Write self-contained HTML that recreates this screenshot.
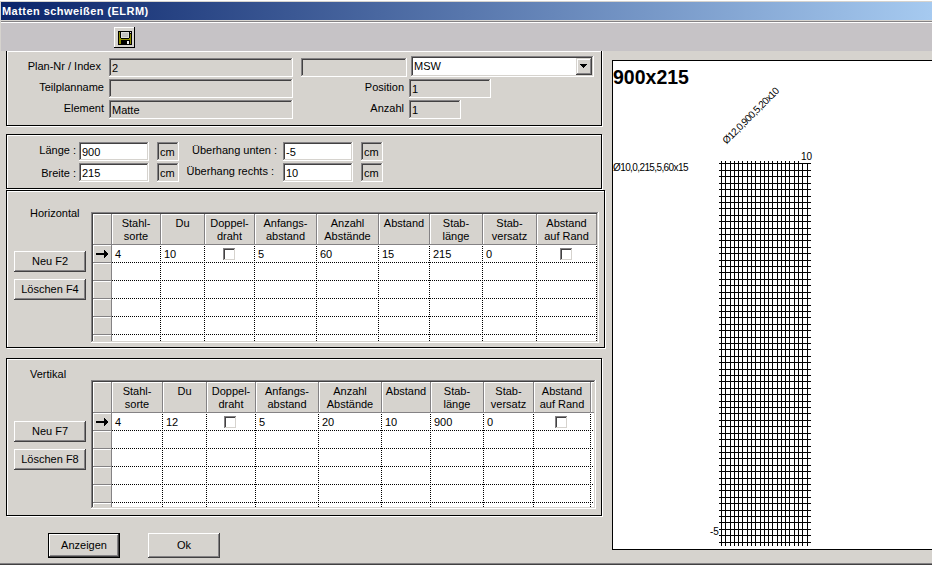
<!DOCTYPE html>
<html><head><meta charset="utf-8"><style>
html,body{margin:0;padding:0;}
body{width:932px;height:565px;position:relative;overflow:hidden;background:#d6d3ce;font-family:"Liberation Sans",sans-serif;}
.a{position:absolute;}
.t{position:absolute;white-space:nowrap;color:#000;font-family:"Liberation Sans",sans-serif;}
</style></head><body>
<div class="a" style="left:0px;top:0px;width:932px;height:1px;background:#ffffff;"></div>
<div class="a" style="left:1px;top:2px;width:931px;height:18px;background:linear-gradient(to right,#0a246a,#a6caf0);"></div>
<div class="t" style="left:2px;top:5px;font-size:11px;line-height:13px;color:#fff;font-weight:bold;letter-spacing:0.45px;">Matten schweißen (ELRM)</div>
<div class="a" style="left:1px;top:21px;width:931px;height:1px;background:#848284;"></div>
<div class="a" style="left:1px;top:22px;width:931px;height:1px;background:#ffffff;"></div>
<div class="a" style="left:1px;top:23px;width:931px;height:28px;background:#c6c3c6;"></div>
<div class="a" style="left:114px;top:27px;width:21px;height:21px;background:#d6d3ce;"></div>
<div class="a" style="left:114px;top:27px;width:21px;height:1px;background:#fff;"></div>
<div class="a" style="left:114px;top:27px;width:1px;height:21px;background:#fff;"></div>
<div class="a" style="left:114px;top:47px;width:21px;height:1px;background:#000;"></div>
<div class="a" style="left:134px;top:27px;width:1px;height:21px;background:#000;"></div>
<svg class="a" style="left:118px;top:31px" width="14" height="14" shape-rendering="crispEdges"><rect x="0" y="0" width="14" height="14" fill="#000"/><rect x="1" y="1" width="1" height="12" fill="#8c8a00"/><rect x="2" y="7" width="1" height="6" fill="#8c8a00"/><rect x="12" y="3" width="1" height="10" fill="#8c8a00"/><rect x="11" y="7" width="1" height="2" fill="#8c8a00"/><rect x="1" y="8" width="12" height="1" fill="#8c8a00"/><rect x="12" y="1" width="1" height="1" fill="#e0e0e0"/><rect x="3" y="1" width="8" height="6" fill="#dcdcdc"/><rect x="4" y="2" width="6" height="4" fill="#c0c0c0"/><rect x="9" y="10" width="2" height="3" fill="#f0f0f0"/></svg>
<div class="a" style="left:7px;top:51px;width:596px;height:1px;background:#fff;"></div>
<div class="a" style="left:7px;top:51px;width:1px;height:76px;background:#fff;"></div>
<div class="a" style="left:7px;top:126px;width:596px;height:1px;background:#fff;"></div>
<div class="a" style="left:602px;top:51px;width:1px;height:76px;background:#fff;"></div>
<div class="a" style="left:6px;top:50px;width:596px;height:1px;background:#000;"></div>
<div class="a" style="left:6px;top:50px;width:1px;height:76px;background:#000;"></div>
<div class="a" style="left:6px;top:125px;width:596px;height:1px;background:#000;"></div>
<div class="a" style="left:601px;top:50px;width:1px;height:76px;background:#000;"></div>
<div class="a" style="left:7px;top:135px;width:596px;height:1px;background:#fff;"></div>
<div class="a" style="left:7px;top:135px;width:1px;height:55px;background:#fff;"></div>
<div class="a" style="left:7px;top:189px;width:596px;height:1px;background:#fff;"></div>
<div class="a" style="left:602px;top:135px;width:1px;height:55px;background:#fff;"></div>
<div class="a" style="left:6px;top:134px;width:596px;height:1px;background:#000;"></div>
<div class="a" style="left:6px;top:134px;width:1px;height:55px;background:#000;"></div>
<div class="a" style="left:6px;top:188px;width:596px;height:1px;background:#000;"></div>
<div class="a" style="left:601px;top:134px;width:1px;height:55px;background:#000;"></div>
<div class="a" style="left:7px;top:191px;width:599px;height:1px;background:#fff;"></div>
<div class="a" style="left:7px;top:191px;width:1px;height:158px;background:#fff;"></div>
<div class="a" style="left:7px;top:348px;width:599px;height:1px;background:#fff;"></div>
<div class="a" style="left:605px;top:191px;width:1px;height:158px;background:#fff;"></div>
<div class="a" style="left:6px;top:190px;width:599px;height:1px;background:#000;"></div>
<div class="a" style="left:6px;top:190px;width:1px;height:158px;background:#000;"></div>
<div class="a" style="left:6px;top:347px;width:599px;height:1px;background:#000;"></div>
<div class="a" style="left:604px;top:190px;width:1px;height:158px;background:#000;"></div>
<div class="a" style="left:7px;top:359px;width:596px;height:1px;background:#fff;"></div>
<div class="a" style="left:7px;top:359px;width:1px;height:158px;background:#fff;"></div>
<div class="a" style="left:7px;top:516px;width:596px;height:1px;background:#fff;"></div>
<div class="a" style="left:602px;top:359px;width:1px;height:158px;background:#fff;"></div>
<div class="a" style="left:6px;top:358px;width:596px;height:1px;background:#000;"></div>
<div class="a" style="left:6px;top:358px;width:1px;height:158px;background:#000;"></div>
<div class="a" style="left:6px;top:515px;width:596px;height:1px;background:#000;"></div>
<div class="a" style="left:601px;top:358px;width:1px;height:158px;background:#000;"></div>
<div class="a" style="left:1px;top:50px;width:931px;height:1px;background:#c6c3c6;"></div>
<div class="t" style="right:831px;top:60px;font-size:11px;line-height:13px;text-align:right;">Plan-Nr / Index</div>
<div class="t" style="right:828px;top:81px;font-size:11px;line-height:13px;text-align:right;">Teilplanname</div>
<div class="t" style="right:828px;top:102px;font-size:11px;line-height:13px;text-align:right;">Element</div>
<div class="a" style="left:109px;top:58px;width:184px;height:19px;background:#d6d3ce;"></div>
<div class="a" style="left:109px;top:58px;width:184px;height:1px;background:#848284;"></div>
<div class="a" style="left:109px;top:58px;width:1px;height:19px;background:#848284;"></div>
<div class="a" style="left:110px;top:59px;width:182px;height:1px;background:#424142;"></div>
<div class="a" style="left:110px;top:59px;width:1px;height:17px;background:#424142;"></div>
<div class="a" style="left:109px;top:76px;width:184px;height:1px;background:#ffffff;"></div>
<div class="a" style="left:292px;top:58px;width:1px;height:19px;background:#ffffff;"></div>
<div class="a" style="left:110px;top:75px;width:182px;height:1px;background:#d6d3ce;"></div>
<div class="a" style="left:291px;top:59px;width:1px;height:17px;background:#d6d3ce;"></div>
<div class="t" style="left:112px;top:62px;font-size:11px;line-height:13px;color:#000;">2</div>
<div class="a" style="left:109px;top:79px;width:184px;height:19px;background:#d6d3ce;"></div>
<div class="a" style="left:109px;top:79px;width:184px;height:1px;background:#848284;"></div>
<div class="a" style="left:109px;top:79px;width:1px;height:19px;background:#848284;"></div>
<div class="a" style="left:110px;top:80px;width:182px;height:1px;background:#424142;"></div>
<div class="a" style="left:110px;top:80px;width:1px;height:17px;background:#424142;"></div>
<div class="a" style="left:109px;top:97px;width:184px;height:1px;background:#ffffff;"></div>
<div class="a" style="left:292px;top:79px;width:1px;height:19px;background:#ffffff;"></div>
<div class="a" style="left:110px;top:96px;width:182px;height:1px;background:#d6d3ce;"></div>
<div class="a" style="left:291px;top:80px;width:1px;height:17px;background:#d6d3ce;"></div>
<div class="a" style="left:109px;top:100px;width:184px;height:19px;background:#d6d3ce;"></div>
<div class="a" style="left:109px;top:100px;width:184px;height:1px;background:#848284;"></div>
<div class="a" style="left:109px;top:100px;width:1px;height:19px;background:#848284;"></div>
<div class="a" style="left:110px;top:101px;width:182px;height:1px;background:#424142;"></div>
<div class="a" style="left:110px;top:101px;width:1px;height:17px;background:#424142;"></div>
<div class="a" style="left:109px;top:118px;width:184px;height:1px;background:#ffffff;"></div>
<div class="a" style="left:292px;top:100px;width:1px;height:19px;background:#ffffff;"></div>
<div class="a" style="left:110px;top:117px;width:182px;height:1px;background:#d6d3ce;"></div>
<div class="a" style="left:291px;top:101px;width:1px;height:17px;background:#d6d3ce;"></div>
<div class="t" style="left:112px;top:104px;font-size:11px;line-height:13px;color:#000;">Matte</div>
<div class="a" style="left:301px;top:58px;width:106px;height:19px;background:#d6d3ce;"></div>
<div class="a" style="left:301px;top:58px;width:106px;height:1px;background:#848284;"></div>
<div class="a" style="left:301px;top:58px;width:1px;height:19px;background:#848284;"></div>
<div class="a" style="left:302px;top:59px;width:104px;height:1px;background:#424142;"></div>
<div class="a" style="left:302px;top:59px;width:1px;height:17px;background:#424142;"></div>
<div class="a" style="left:301px;top:76px;width:106px;height:1px;background:#ffffff;"></div>
<div class="a" style="left:406px;top:58px;width:1px;height:19px;background:#ffffff;"></div>
<div class="a" style="left:302px;top:75px;width:104px;height:1px;background:#d6d3ce;"></div>
<div class="a" style="left:405px;top:59px;width:1px;height:17px;background:#d6d3ce;"></div>
<div class="a" style="left:411px;top:56px;width:183px;height:21px;background:#fff;"></div>
<div class="a" style="left:411px;top:56px;width:183px;height:1px;background:#848284;"></div>
<div class="a" style="left:411px;top:56px;width:1px;height:21px;background:#848284;"></div>
<div class="a" style="left:412px;top:57px;width:181px;height:1px;background:#424142;"></div>
<div class="a" style="left:412px;top:57px;width:1px;height:19px;background:#424142;"></div>
<div class="a" style="left:411px;top:76px;width:183px;height:1px;background:#ffffff;"></div>
<div class="a" style="left:593px;top:56px;width:1px;height:21px;background:#ffffff;"></div>
<div class="a" style="left:412px;top:75px;width:181px;height:1px;background:#d6d3ce;"></div>
<div class="a" style="left:592px;top:57px;width:1px;height:19px;background:#d6d3ce;"></div>
<div class="t" style="left:414px;top:60px;font-size:11px;line-height:13px;color:#000;">MSW</div>
<div class="a" style="left:576px;top:58px;width:16px;height:17px;background:#d6d3ce;"></div>
<div class="a" style="left:576px;top:58px;width:16px;height:1px;background:#d6d3ce;"></div>
<div class="a" style="left:576px;top:58px;width:1px;height:17px;background:#d6d3ce;"></div>
<div class="a" style="left:577px;top:59px;width:14px;height:1px;background:#fff;"></div>
<div class="a" style="left:577px;top:59px;width:1px;height:15px;background:#fff;"></div>
<div class="a" style="left:576px;top:74px;width:16px;height:1px;background:#424142;"></div>
<div class="a" style="left:591px;top:58px;width:1px;height:17px;background:#424142;"></div>
<div class="a" style="left:577px;top:73px;width:14px;height:1px;background:#848284;"></div>
<div class="a" style="left:590px;top:59px;width:1px;height:15px;background:#848284;"></div>
<div class="a" style="left:580px;top:64px;width:7px;height:1px;background:#000;"></div>
<div class="a" style="left:581px;top:65px;width:5px;height:1px;background:#000;"></div>
<div class="a" style="left:582px;top:66px;width:3px;height:1px;background:#000;"></div>
<div class="a" style="left:583px;top:67px;width:1px;height:1px;background:#000;"></div>
<div class="t" style="right:528px;top:81px;font-size:11px;line-height:13px;text-align:right;">Position</div>
<div class="a" style="left:409px;top:79px;width:82px;height:19px;background:#d6d3ce;"></div>
<div class="a" style="left:409px;top:79px;width:82px;height:1px;background:#848284;"></div>
<div class="a" style="left:409px;top:79px;width:1px;height:19px;background:#848284;"></div>
<div class="a" style="left:410px;top:80px;width:80px;height:1px;background:#424142;"></div>
<div class="a" style="left:410px;top:80px;width:1px;height:17px;background:#424142;"></div>
<div class="a" style="left:409px;top:97px;width:82px;height:1px;background:#ffffff;"></div>
<div class="a" style="left:490px;top:79px;width:1px;height:19px;background:#ffffff;"></div>
<div class="a" style="left:410px;top:96px;width:80px;height:1px;background:#d6d3ce;"></div>
<div class="a" style="left:489px;top:80px;width:1px;height:17px;background:#d6d3ce;"></div>
<div class="t" style="left:412px;top:83px;font-size:11px;line-height:13px;color:#000;">1</div>
<div class="t" style="right:528px;top:102px;font-size:11px;line-height:13px;text-align:right;">Anzahl</div>
<div class="a" style="left:409px;top:100px;width:52px;height:19px;background:#d6d3ce;"></div>
<div class="a" style="left:409px;top:100px;width:52px;height:1px;background:#848284;"></div>
<div class="a" style="left:409px;top:100px;width:1px;height:19px;background:#848284;"></div>
<div class="a" style="left:410px;top:101px;width:50px;height:1px;background:#424142;"></div>
<div class="a" style="left:410px;top:101px;width:1px;height:17px;background:#424142;"></div>
<div class="a" style="left:409px;top:118px;width:52px;height:1px;background:#ffffff;"></div>
<div class="a" style="left:460px;top:100px;width:1px;height:19px;background:#ffffff;"></div>
<div class="a" style="left:410px;top:117px;width:50px;height:1px;background:#d6d3ce;"></div>
<div class="a" style="left:459px;top:101px;width:1px;height:17px;background:#d6d3ce;"></div>
<div class="t" style="left:412px;top:104px;font-size:11px;line-height:13px;color:#000;">1</div>
<div class="t" style="right:856px;top:144px;font-size:11px;line-height:13px;text-align:right;">Länge :</div>
<div class="a" style="left:79px;top:142px;width:70px;height:19px;background:#fff;"></div>
<div class="a" style="left:79px;top:142px;width:70px;height:1px;background:#848284;"></div>
<div class="a" style="left:79px;top:142px;width:1px;height:19px;background:#848284;"></div>
<div class="a" style="left:80px;top:143px;width:68px;height:1px;background:#424142;"></div>
<div class="a" style="left:80px;top:143px;width:1px;height:17px;background:#424142;"></div>
<div class="a" style="left:79px;top:160px;width:70px;height:1px;background:#ffffff;"></div>
<div class="a" style="left:148px;top:142px;width:1px;height:19px;background:#ffffff;"></div>
<div class="a" style="left:80px;top:159px;width:68px;height:1px;background:#d6d3ce;"></div>
<div class="a" style="left:147px;top:143px;width:1px;height:17px;background:#d6d3ce;"></div>
<div class="t" style="left:82px;top:146px;font-size:11px;line-height:13px;color:#000;">900</div>
<div class="a" style="left:157px;top:142px;width:22px;height:19px;background:#d6d3ce;"></div>
<div class="a" style="left:157px;top:142px;width:22px;height:1px;background:#848284;"></div>
<div class="a" style="left:157px;top:142px;width:1px;height:19px;background:#848284;"></div>
<div class="a" style="left:158px;top:143px;width:20px;height:1px;background:#424142;"></div>
<div class="a" style="left:158px;top:143px;width:1px;height:17px;background:#424142;"></div>
<div class="a" style="left:157px;top:160px;width:22px;height:1px;background:#ffffff;"></div>
<div class="a" style="left:178px;top:142px;width:1px;height:19px;background:#ffffff;"></div>
<div class="a" style="left:158px;top:159px;width:20px;height:1px;background:#d6d3ce;"></div>
<div class="a" style="left:177px;top:143px;width:1px;height:17px;background:#d6d3ce;"></div>
<div class="t" style="left:160px;top:146px;font-size:11px;line-height:13px;color:#000;">cm</div>
<div class="t" style="right:856px;top:167px;font-size:11px;line-height:13px;text-align:right;">Breite :</div>
<div class="a" style="left:79px;top:163px;width:70px;height:19px;background:#fff;"></div>
<div class="a" style="left:79px;top:163px;width:70px;height:1px;background:#848284;"></div>
<div class="a" style="left:79px;top:163px;width:1px;height:19px;background:#848284;"></div>
<div class="a" style="left:80px;top:164px;width:68px;height:1px;background:#424142;"></div>
<div class="a" style="left:80px;top:164px;width:1px;height:17px;background:#424142;"></div>
<div class="a" style="left:79px;top:181px;width:70px;height:1px;background:#ffffff;"></div>
<div class="a" style="left:148px;top:163px;width:1px;height:19px;background:#ffffff;"></div>
<div class="a" style="left:80px;top:180px;width:68px;height:1px;background:#d6d3ce;"></div>
<div class="a" style="left:147px;top:164px;width:1px;height:17px;background:#d6d3ce;"></div>
<div class="t" style="left:82px;top:167px;font-size:11px;line-height:13px;color:#000;">215</div>
<div class="a" style="left:157px;top:163px;width:22px;height:19px;background:#d6d3ce;"></div>
<div class="a" style="left:157px;top:163px;width:22px;height:1px;background:#848284;"></div>
<div class="a" style="left:157px;top:163px;width:1px;height:19px;background:#848284;"></div>
<div class="a" style="left:158px;top:164px;width:20px;height:1px;background:#424142;"></div>
<div class="a" style="left:158px;top:164px;width:1px;height:17px;background:#424142;"></div>
<div class="a" style="left:157px;top:181px;width:22px;height:1px;background:#ffffff;"></div>
<div class="a" style="left:178px;top:163px;width:1px;height:19px;background:#ffffff;"></div>
<div class="a" style="left:158px;top:180px;width:20px;height:1px;background:#d6d3ce;"></div>
<div class="a" style="left:177px;top:164px;width:1px;height:17px;background:#d6d3ce;"></div>
<div class="t" style="left:160px;top:167px;font-size:11px;line-height:13px;color:#000;">cm</div>
<div class="t" style="right:655px;top:144px;font-size:11px;line-height:13px;text-align:right;">Überhang unten :</div>
<div class="a" style="left:283px;top:142px;width:70px;height:19px;background:#fff;"></div>
<div class="a" style="left:283px;top:142px;width:70px;height:1px;background:#848284;"></div>
<div class="a" style="left:283px;top:142px;width:1px;height:19px;background:#848284;"></div>
<div class="a" style="left:284px;top:143px;width:68px;height:1px;background:#424142;"></div>
<div class="a" style="left:284px;top:143px;width:1px;height:17px;background:#424142;"></div>
<div class="a" style="left:283px;top:160px;width:70px;height:1px;background:#ffffff;"></div>
<div class="a" style="left:352px;top:142px;width:1px;height:19px;background:#ffffff;"></div>
<div class="a" style="left:284px;top:159px;width:68px;height:1px;background:#d6d3ce;"></div>
<div class="a" style="left:351px;top:143px;width:1px;height:17px;background:#d6d3ce;"></div>
<div class="t" style="left:286px;top:146px;font-size:11px;line-height:13px;color:#000;">-5</div>
<div class="a" style="left:361px;top:142px;width:22px;height:19px;background:#d6d3ce;"></div>
<div class="a" style="left:361px;top:142px;width:22px;height:1px;background:#848284;"></div>
<div class="a" style="left:361px;top:142px;width:1px;height:19px;background:#848284;"></div>
<div class="a" style="left:362px;top:143px;width:20px;height:1px;background:#424142;"></div>
<div class="a" style="left:362px;top:143px;width:1px;height:17px;background:#424142;"></div>
<div class="a" style="left:361px;top:160px;width:22px;height:1px;background:#ffffff;"></div>
<div class="a" style="left:382px;top:142px;width:1px;height:19px;background:#ffffff;"></div>
<div class="a" style="left:362px;top:159px;width:20px;height:1px;background:#d6d3ce;"></div>
<div class="a" style="left:381px;top:143px;width:1px;height:17px;background:#d6d3ce;"></div>
<div class="t" style="left:364px;top:146px;font-size:11px;line-height:13px;color:#000;">cm</div>
<div class="t" style="right:658px;top:165px;font-size:11px;line-height:13px;text-align:right;">Überhang rechts :</div>
<div class="a" style="left:283px;top:163px;width:70px;height:19px;background:#fff;"></div>
<div class="a" style="left:283px;top:163px;width:70px;height:1px;background:#848284;"></div>
<div class="a" style="left:283px;top:163px;width:1px;height:19px;background:#848284;"></div>
<div class="a" style="left:284px;top:164px;width:68px;height:1px;background:#424142;"></div>
<div class="a" style="left:284px;top:164px;width:1px;height:17px;background:#424142;"></div>
<div class="a" style="left:283px;top:181px;width:70px;height:1px;background:#ffffff;"></div>
<div class="a" style="left:352px;top:163px;width:1px;height:19px;background:#ffffff;"></div>
<div class="a" style="left:284px;top:180px;width:68px;height:1px;background:#d6d3ce;"></div>
<div class="a" style="left:351px;top:164px;width:1px;height:17px;background:#d6d3ce;"></div>
<div class="t" style="left:286px;top:167px;font-size:11px;line-height:13px;color:#000;">10</div>
<div class="a" style="left:361px;top:163px;width:22px;height:19px;background:#d6d3ce;"></div>
<div class="a" style="left:361px;top:163px;width:22px;height:1px;background:#848284;"></div>
<div class="a" style="left:361px;top:163px;width:1px;height:19px;background:#848284;"></div>
<div class="a" style="left:362px;top:164px;width:20px;height:1px;background:#424142;"></div>
<div class="a" style="left:362px;top:164px;width:1px;height:17px;background:#424142;"></div>
<div class="a" style="left:361px;top:181px;width:22px;height:1px;background:#ffffff;"></div>
<div class="a" style="left:382px;top:163px;width:1px;height:19px;background:#ffffff;"></div>
<div class="a" style="left:362px;top:180px;width:20px;height:1px;background:#d6d3ce;"></div>
<div class="a" style="left:381px;top:164px;width:1px;height:17px;background:#d6d3ce;"></div>
<div class="t" style="left:364px;top:167px;font-size:11px;line-height:13px;color:#000;">cm</div>
<div class="a" style="left:91px;top:212px;width:508px;height:131px;background:#fff;"></div>
<div class="a" style="left:91px;top:212px;width:508px;height:1px;background:#848284;"></div>
<div class="a" style="left:91px;top:212px;width:1px;height:131px;background:#848284;"></div>
<div class="a" style="left:92px;top:213px;width:506px;height:1px;background:#424142;"></div>
<div class="a" style="left:92px;top:213px;width:1px;height:129px;background:#424142;"></div>
<div class="a" style="left:91px;top:342px;width:508px;height:1px;background:#ffffff;"></div>
<div class="a" style="left:598px;top:212px;width:1px;height:131px;background:#ffffff;"></div>
<div class="a" style="left:92px;top:341px;width:506px;height:1px;background:#d6d3ce;"></div>
<div class="a" style="left:597px;top:213px;width:1px;height:129px;background:#d6d3ce;"></div>
<div class="a" style="left:93px;top:214px;width:504px;height:127px;overflow:hidden;">
<div class="a" style="left:0px;top:0px;width:504px;height:30px;background:#d6d3ce;"></div>
<div class="a" style="left:0px;top:0px;width:504px;height:1px;background:#fff;"></div>
<div class="a" style="left:0px;top:30px;width:18px;height:97px;background:#d6d3ce;"></div>
<div class="a" style="left:18px;top:0px;width:1px;height:31px;background:#848284;"></div>
<div class="a" style="left:0px;top:0px;width:1px;height:30px;background:#fff;"></div>
<div class="a" style="left:67px;top:0px;width:1px;height:31px;background:#848284;"></div>
<div class="a" style="left:19px;top:0px;width:1px;height:30px;background:#fff;"></div>
<div class="a" style="left:111px;top:0px;width:1px;height:31px;background:#848284;"></div>
<div class="a" style="left:68px;top:0px;width:1px;height:30px;background:#fff;"></div>
<div class="a" style="left:161px;top:0px;width:1px;height:31px;background:#848284;"></div>
<div class="a" style="left:112px;top:0px;width:1px;height:30px;background:#fff;"></div>
<div class="a" style="left:223px;top:0px;width:1px;height:31px;background:#848284;"></div>
<div class="a" style="left:162px;top:0px;width:1px;height:30px;background:#fff;"></div>
<div class="a" style="left:285px;top:0px;width:1px;height:31px;background:#848284;"></div>
<div class="a" style="left:224px;top:0px;width:1px;height:30px;background:#fff;"></div>
<div class="a" style="left:336px;top:0px;width:1px;height:31px;background:#848284;"></div>
<div class="a" style="left:286px;top:0px;width:1px;height:30px;background:#fff;"></div>
<div class="a" style="left:389px;top:0px;width:1px;height:31px;background:#848284;"></div>
<div class="a" style="left:337px;top:0px;width:1px;height:30px;background:#fff;"></div>
<div class="a" style="left:443px;top:0px;width:1px;height:31px;background:#848284;"></div>
<div class="a" style="left:390px;top:0px;width:1px;height:30px;background:#fff;"></div>
<div class="a" style="left:503px;top:0px;width:1px;height:31px;background:#848284;"></div>
<div class="a" style="left:444px;top:0px;width:1px;height:30px;background:#fff;"></div>
<div class="a" style="left:0px;top:30px;width:504px;height:1px;background:#848284;"></div>
<div class="a" style="left:18px;top:30px;width:1px;height:97px;background:#848284;"></div>
<div class="a" style="left:0px;top:31px;width:1px;height:17px;background:#fff;"></div>
<div class="a" style="left:0px;top:31px;width:18px;height:1px;background:#fff;"></div>
<div class="a" style="left:0px;top:48px;width:18px;height:1px;background:#848284;"></div>
<div class="a" style="left:19px;top:48px;width:485px;height:1px;background:transparent;background-image:repeating-linear-gradient(to right,#000 0,#000 1px,transparent 1px,transparent 2px);background-position:0px 0;"></div>
<div class="a" style="left:0px;top:49px;width:1px;height:17px;background:#fff;"></div>
<div class="a" style="left:0px;top:49px;width:18px;height:1px;background:#fff;"></div>
<div class="a" style="left:0px;top:66px;width:18px;height:1px;background:#848284;"></div>
<div class="a" style="left:19px;top:66px;width:485px;height:1px;background:transparent;background-image:repeating-linear-gradient(to right,#000 0,#000 1px,transparent 1px,transparent 2px);background-position:0px 0;"></div>
<div class="a" style="left:0px;top:67px;width:1px;height:17px;background:#fff;"></div>
<div class="a" style="left:0px;top:67px;width:18px;height:1px;background:#fff;"></div>
<div class="a" style="left:0px;top:84px;width:18px;height:1px;background:#848284;"></div>
<div class="a" style="left:19px;top:84px;width:485px;height:1px;background:transparent;background-image:repeating-linear-gradient(to right,#000 0,#000 1px,transparent 1px,transparent 2px);background-position:0px 0;"></div>
<div class="a" style="left:0px;top:85px;width:1px;height:17px;background:#fff;"></div>
<div class="a" style="left:0px;top:85px;width:18px;height:1px;background:#fff;"></div>
<div class="a" style="left:0px;top:102px;width:18px;height:1px;background:#848284;"></div>
<div class="a" style="left:19px;top:102px;width:485px;height:1px;background:transparent;background-image:repeating-linear-gradient(to right,#000 0,#000 1px,transparent 1px,transparent 2px);background-position:0px 0;"></div>
<div class="a" style="left:0px;top:103px;width:1px;height:17px;background:#fff;"></div>
<div class="a" style="left:0px;top:103px;width:18px;height:1px;background:#fff;"></div>
<div class="a" style="left:0px;top:120px;width:18px;height:1px;background:#848284;"></div>
<div class="a" style="left:19px;top:120px;width:485px;height:1px;background:transparent;background-image:repeating-linear-gradient(to right,#000 0,#000 1px,transparent 1px,transparent 2px);background-position:0px 0;"></div>
<div class="a" style="left:0px;top:121px;width:1px;height:17px;background:#fff;"></div>
<div class="a" style="left:0px;top:121px;width:18px;height:1px;background:#fff;"></div>
<div class="a" style="left:0px;top:138px;width:18px;height:1px;background:#848284;"></div>
<div class="a" style="left:19px;top:138px;width:485px;height:1px;background:transparent;background-image:repeating-linear-gradient(to right,#000 0,#000 1px,transparent 1px,transparent 2px);background-position:0px 0;"></div>
<div class="a" style="left:67px;top:31px;width:1px;height:96px;background:transparent;background-image:repeating-linear-gradient(to bottom,#000 0,#000 1px,transparent 1px,transparent 2px);background-position:0 1px;"></div>
<div class="a" style="left:111px;top:31px;width:1px;height:96px;background:transparent;background-image:repeating-linear-gradient(to bottom,#000 0,#000 1px,transparent 1px,transparent 2px);background-position:0 1px;"></div>
<div class="a" style="left:161px;top:31px;width:1px;height:96px;background:transparent;background-image:repeating-linear-gradient(to bottom,#000 0,#000 1px,transparent 1px,transparent 2px);background-position:0 1px;"></div>
<div class="a" style="left:223px;top:31px;width:1px;height:96px;background:transparent;background-image:repeating-linear-gradient(to bottom,#000 0,#000 1px,transparent 1px,transparent 2px);background-position:0 1px;"></div>
<div class="a" style="left:285px;top:31px;width:1px;height:96px;background:transparent;background-image:repeating-linear-gradient(to bottom,#000 0,#000 1px,transparent 1px,transparent 2px);background-position:0 1px;"></div>
<div class="a" style="left:336px;top:31px;width:1px;height:96px;background:transparent;background-image:repeating-linear-gradient(to bottom,#000 0,#000 1px,transparent 1px,transparent 2px);background-position:0 1px;"></div>
<div class="a" style="left:389px;top:31px;width:1px;height:96px;background:transparent;background-image:repeating-linear-gradient(to bottom,#000 0,#000 1px,transparent 1px,transparent 2px);background-position:0 1px;"></div>
<div class="a" style="left:443px;top:31px;width:1px;height:96px;background:transparent;background-image:repeating-linear-gradient(to bottom,#000 0,#000 1px,transparent 1px,transparent 2px);background-position:0 1px;"></div>
<div class="a" style="left:503px;top:31px;width:1px;height:96px;background:transparent;background-image:repeating-linear-gradient(to bottom,#000 0,#000 1px,transparent 1px,transparent 2px);background-position:0 1px;"></div>
</div>
<div class="t" style="left:112px;width:48px;top:217px;font-size:11px;line-height:13px;text-align:center;">Stahl-</div>
<div class="t" style="left:112px;width:48px;top:230px;font-size:11px;line-height:13px;text-align:center;">sorte</div>
<div class="t" style="left:161px;width:43px;top:217px;font-size:11px;line-height:13px;text-align:center;">Du</div>
<div class="t" style="left:205px;width:49px;top:217px;font-size:11px;line-height:13px;text-align:center;">Doppel-</div>
<div class="t" style="left:205px;width:49px;top:230px;font-size:11px;line-height:13px;text-align:center;">draht</div>
<div class="t" style="left:255px;width:61px;top:217px;font-size:11px;line-height:13px;text-align:center;">Anfangs-</div>
<div class="t" style="left:255px;width:61px;top:230px;font-size:11px;line-height:13px;text-align:center;">abstand</div>
<div class="t" style="left:317px;width:61px;top:217px;font-size:11px;line-height:13px;text-align:center;">Anzahl</div>
<div class="t" style="left:317px;width:61px;top:230px;font-size:11px;line-height:13px;text-align:center;">Abstände</div>
<div class="t" style="left:379px;width:50px;top:217px;font-size:11px;line-height:13px;text-align:center;">Abstand</div>
<div class="t" style="left:430px;width:52px;top:217px;font-size:11px;line-height:13px;text-align:center;">Stab-</div>
<div class="t" style="left:430px;width:52px;top:230px;font-size:11px;line-height:13px;text-align:center;">länge</div>
<div class="t" style="left:483px;width:53px;top:217px;font-size:11px;line-height:13px;text-align:center;">Stab-</div>
<div class="t" style="left:483px;width:53px;top:230px;font-size:11px;line-height:13px;text-align:center;">versatz</div>
<div class="t" style="left:537px;width:59px;top:217px;font-size:11px;line-height:13px;text-align:center;">Abstand</div>
<div class="t" style="left:537px;width:59px;top:230px;font-size:11px;line-height:13px;text-align:center;">auf Rand</div>
<svg class="a" style="left:96px;top:250px" width="13" height="8" shape-rendering="crispEdges"><rect x="0" y="3" width="9" height="2" fill="#000"/><rect x="8" y="0" width="1" height="8" fill="#000"/><rect x="9" y="1" width="1" height="6" fill="#000"/><rect x="10" y="2" width="1" height="4" fill="#000"/><rect x="11" y="3" width="1" height="2" fill="#000"/></svg>
<div class="t" style="left:115px;top:248px;font-size:11px;line-height:13px;color:#000;">4</div>
<div class="t" style="left:164px;top:248px;font-size:11px;line-height:13px;color:#000;">10</div>
<div class="a" style="left:223px;top:248px;width:13px;height:13px;background:#fff;"></div>
<div class="a" style="left:223px;top:248px;width:13px;height:1px;background:#848284;"></div>
<div class="a" style="left:223px;top:248px;width:1px;height:13px;background:#848284;"></div>
<div class="a" style="left:224px;top:249px;width:11px;height:1px;background:#424142;"></div>
<div class="a" style="left:224px;top:249px;width:1px;height:11px;background:#424142;"></div>
<div class="a" style="left:223px;top:260px;width:13px;height:1px;background:#ffffff;"></div>
<div class="a" style="left:235px;top:248px;width:1px;height:13px;background:#ffffff;"></div>
<div class="a" style="left:224px;top:259px;width:11px;height:1px;background:#d6d3ce;"></div>
<div class="a" style="left:234px;top:249px;width:1px;height:11px;background:#d6d3ce;"></div>
<div class="t" style="left:258px;top:248px;font-size:11px;line-height:13px;color:#000;">5</div>
<div class="t" style="left:320px;top:248px;font-size:11px;line-height:13px;color:#000;">60</div>
<div class="t" style="left:382px;top:248px;font-size:11px;line-height:13px;color:#000;">15</div>
<div class="t" style="left:433px;top:248px;font-size:11px;line-height:13px;color:#000;">215</div>
<div class="t" style="left:486px;top:248px;font-size:11px;line-height:13px;color:#000;">0</div>
<div class="a" style="left:560px;top:248px;width:13px;height:13px;background:#fff;"></div>
<div class="a" style="left:560px;top:248px;width:13px;height:1px;background:#848284;"></div>
<div class="a" style="left:560px;top:248px;width:1px;height:13px;background:#848284;"></div>
<div class="a" style="left:561px;top:249px;width:11px;height:1px;background:#424142;"></div>
<div class="a" style="left:561px;top:249px;width:1px;height:11px;background:#424142;"></div>
<div class="a" style="left:560px;top:260px;width:13px;height:1px;background:#ffffff;"></div>
<div class="a" style="left:572px;top:248px;width:1px;height:13px;background:#ffffff;"></div>
<div class="a" style="left:561px;top:259px;width:11px;height:1px;background:#d6d3ce;"></div>
<div class="a" style="left:571px;top:249px;width:1px;height:11px;background:#d6d3ce;"></div>
<div class="a" style="left:91px;top:380px;width:505px;height:129px;background:#fff;"></div>
<div class="a" style="left:91px;top:380px;width:505px;height:1px;background:#848284;"></div>
<div class="a" style="left:91px;top:380px;width:1px;height:129px;background:#848284;"></div>
<div class="a" style="left:92px;top:381px;width:503px;height:1px;background:#424142;"></div>
<div class="a" style="left:92px;top:381px;width:1px;height:127px;background:#424142;"></div>
<div class="a" style="left:91px;top:508px;width:505px;height:1px;background:#ffffff;"></div>
<div class="a" style="left:595px;top:380px;width:1px;height:129px;background:#ffffff;"></div>
<div class="a" style="left:92px;top:507px;width:503px;height:1px;background:#d6d3ce;"></div>
<div class="a" style="left:594px;top:381px;width:1px;height:127px;background:#d6d3ce;"></div>
<div class="a" style="left:93px;top:382px;width:501px;height:125px;overflow:hidden;">
<div class="a" style="left:0px;top:0px;width:501px;height:30px;background:#d6d3ce;"></div>
<div class="a" style="left:0px;top:0px;width:501px;height:1px;background:#fff;"></div>
<div class="a" style="left:0px;top:30px;width:18px;height:95px;background:#d6d3ce;"></div>
<div class="a" style="left:18px;top:0px;width:1px;height:31px;background:#848284;"></div>
<div class="a" style="left:0px;top:0px;width:1px;height:30px;background:#fff;"></div>
<div class="a" style="left:69px;top:0px;width:1px;height:31px;background:#848284;"></div>
<div class="a" style="left:19px;top:0px;width:1px;height:30px;background:#fff;"></div>
<div class="a" style="left:113px;top:0px;width:1px;height:31px;background:#848284;"></div>
<div class="a" style="left:70px;top:0px;width:1px;height:30px;background:#fff;"></div>
<div class="a" style="left:162px;top:0px;width:1px;height:31px;background:#848284;"></div>
<div class="a" style="left:114px;top:0px;width:1px;height:30px;background:#fff;"></div>
<div class="a" style="left:225px;top:0px;width:1px;height:31px;background:#848284;"></div>
<div class="a" style="left:163px;top:0px;width:1px;height:30px;background:#fff;"></div>
<div class="a" style="left:288px;top:0px;width:1px;height:31px;background:#848284;"></div>
<div class="a" style="left:226px;top:0px;width:1px;height:30px;background:#fff;"></div>
<div class="a" style="left:337px;top:0px;width:1px;height:31px;background:#848284;"></div>
<div class="a" style="left:289px;top:0px;width:1px;height:30px;background:#fff;"></div>
<div class="a" style="left:390px;top:0px;width:1px;height:31px;background:#848284;"></div>
<div class="a" style="left:338px;top:0px;width:1px;height:30px;background:#fff;"></div>
<div class="a" style="left:440px;top:0px;width:1px;height:31px;background:#848284;"></div>
<div class="a" style="left:391px;top:0px;width:1px;height:30px;background:#fff;"></div>
<div class="a" style="left:497px;top:0px;width:1px;height:31px;background:#848284;"></div>
<div class="a" style="left:441px;top:0px;width:1px;height:30px;background:#fff;"></div>
<div class="a" style="left:498px;top:0px;width:1px;height:30px;background:#fff;"></div>
<div class="a" style="left:0px;top:30px;width:501px;height:1px;background:#848284;"></div>
<div class="a" style="left:18px;top:30px;width:1px;height:95px;background:#848284;"></div>
<div class="a" style="left:0px;top:31px;width:1px;height:17px;background:#fff;"></div>
<div class="a" style="left:0px;top:31px;width:18px;height:1px;background:#fff;"></div>
<div class="a" style="left:0px;top:48px;width:18px;height:1px;background:#848284;"></div>
<div class="a" style="left:19px;top:48px;width:482px;height:1px;background:transparent;background-image:repeating-linear-gradient(to right,#000 0,#000 1px,transparent 1px,transparent 2px);background-position:0px 0;"></div>
<div class="a" style="left:0px;top:49px;width:1px;height:17px;background:#fff;"></div>
<div class="a" style="left:0px;top:49px;width:18px;height:1px;background:#fff;"></div>
<div class="a" style="left:0px;top:66px;width:18px;height:1px;background:#848284;"></div>
<div class="a" style="left:19px;top:66px;width:482px;height:1px;background:transparent;background-image:repeating-linear-gradient(to right,#000 0,#000 1px,transparent 1px,transparent 2px);background-position:0px 0;"></div>
<div class="a" style="left:0px;top:67px;width:1px;height:17px;background:#fff;"></div>
<div class="a" style="left:0px;top:67px;width:18px;height:1px;background:#fff;"></div>
<div class="a" style="left:0px;top:84px;width:18px;height:1px;background:#848284;"></div>
<div class="a" style="left:19px;top:84px;width:482px;height:1px;background:transparent;background-image:repeating-linear-gradient(to right,#000 0,#000 1px,transparent 1px,transparent 2px);background-position:0px 0;"></div>
<div class="a" style="left:0px;top:85px;width:1px;height:17px;background:#fff;"></div>
<div class="a" style="left:0px;top:85px;width:18px;height:1px;background:#fff;"></div>
<div class="a" style="left:0px;top:102px;width:18px;height:1px;background:#848284;"></div>
<div class="a" style="left:19px;top:102px;width:482px;height:1px;background:transparent;background-image:repeating-linear-gradient(to right,#000 0,#000 1px,transparent 1px,transparent 2px);background-position:0px 0;"></div>
<div class="a" style="left:0px;top:103px;width:1px;height:17px;background:#fff;"></div>
<div class="a" style="left:0px;top:103px;width:18px;height:1px;background:#fff;"></div>
<div class="a" style="left:0px;top:120px;width:18px;height:1px;background:#848284;"></div>
<div class="a" style="left:19px;top:120px;width:482px;height:1px;background:transparent;background-image:repeating-linear-gradient(to right,#000 0,#000 1px,transparent 1px,transparent 2px);background-position:0px 0;"></div>
<div class="a" style="left:0px;top:121px;width:1px;height:17px;background:#fff;"></div>
<div class="a" style="left:0px;top:121px;width:18px;height:1px;background:#fff;"></div>
<div class="a" style="left:0px;top:138px;width:18px;height:1px;background:#848284;"></div>
<div class="a" style="left:19px;top:138px;width:482px;height:1px;background:transparent;background-image:repeating-linear-gradient(to right,#000 0,#000 1px,transparent 1px,transparent 2px);background-position:0px 0;"></div>
<div class="a" style="left:69px;top:31px;width:1px;height:94px;background:transparent;background-image:repeating-linear-gradient(to bottom,#000 0,#000 1px,transparent 1px,transparent 2px);background-position:0 1px;"></div>
<div class="a" style="left:113px;top:31px;width:1px;height:94px;background:transparent;background-image:repeating-linear-gradient(to bottom,#000 0,#000 1px,transparent 1px,transparent 2px);background-position:0 1px;"></div>
<div class="a" style="left:162px;top:31px;width:1px;height:94px;background:transparent;background-image:repeating-linear-gradient(to bottom,#000 0,#000 1px,transparent 1px,transparent 2px);background-position:0 1px;"></div>
<div class="a" style="left:225px;top:31px;width:1px;height:94px;background:transparent;background-image:repeating-linear-gradient(to bottom,#000 0,#000 1px,transparent 1px,transparent 2px);background-position:0 1px;"></div>
<div class="a" style="left:288px;top:31px;width:1px;height:94px;background:transparent;background-image:repeating-linear-gradient(to bottom,#000 0,#000 1px,transparent 1px,transparent 2px);background-position:0 1px;"></div>
<div class="a" style="left:337px;top:31px;width:1px;height:94px;background:transparent;background-image:repeating-linear-gradient(to bottom,#000 0,#000 1px,transparent 1px,transparent 2px);background-position:0 1px;"></div>
<div class="a" style="left:390px;top:31px;width:1px;height:94px;background:transparent;background-image:repeating-linear-gradient(to bottom,#000 0,#000 1px,transparent 1px,transparent 2px);background-position:0 1px;"></div>
<div class="a" style="left:440px;top:31px;width:1px;height:94px;background:transparent;background-image:repeating-linear-gradient(to bottom,#000 0,#000 1px,transparent 1px,transparent 2px);background-position:0 1px;"></div>
<div class="a" style="left:497px;top:31px;width:1px;height:94px;background:transparent;background-image:repeating-linear-gradient(to bottom,#000 0,#000 1px,transparent 1px,transparent 2px);background-position:0 1px;"></div>
</div>
<div class="t" style="left:112px;width:50px;top:385px;font-size:11px;line-height:13px;text-align:center;">Stahl-</div>
<div class="t" style="left:112px;width:50px;top:398px;font-size:11px;line-height:13px;text-align:center;">sorte</div>
<div class="t" style="left:163px;width:43px;top:385px;font-size:11px;line-height:13px;text-align:center;">Du</div>
<div class="t" style="left:207px;width:48px;top:385px;font-size:11px;line-height:13px;text-align:center;">Doppel-</div>
<div class="t" style="left:207px;width:48px;top:398px;font-size:11px;line-height:13px;text-align:center;">draht</div>
<div class="t" style="left:256px;width:62px;top:385px;font-size:11px;line-height:13px;text-align:center;">Anfangs-</div>
<div class="t" style="left:256px;width:62px;top:398px;font-size:11px;line-height:13px;text-align:center;">abstand</div>
<div class="t" style="left:319px;width:62px;top:385px;font-size:11px;line-height:13px;text-align:center;">Anzahl</div>
<div class="t" style="left:319px;width:62px;top:398px;font-size:11px;line-height:13px;text-align:center;">Abstände</div>
<div class="t" style="left:382px;width:48px;top:385px;font-size:11px;line-height:13px;text-align:center;">Abstand</div>
<div class="t" style="left:431px;width:52px;top:385px;font-size:11px;line-height:13px;text-align:center;">Stab-</div>
<div class="t" style="left:431px;width:52px;top:398px;font-size:11px;line-height:13px;text-align:center;">länge</div>
<div class="t" style="left:484px;width:49px;top:385px;font-size:11px;line-height:13px;text-align:center;">Stab-</div>
<div class="t" style="left:484px;width:49px;top:398px;font-size:11px;line-height:13px;text-align:center;">versatz</div>
<div class="t" style="left:534px;width:56px;top:385px;font-size:11px;line-height:13px;text-align:center;">Abstand</div>
<div class="t" style="left:534px;width:56px;top:398px;font-size:11px;line-height:13px;text-align:center;">auf Rand</div>
<svg class="a" style="left:96px;top:418px" width="13" height="8" shape-rendering="crispEdges"><rect x="0" y="3" width="9" height="2" fill="#000"/><rect x="8" y="0" width="1" height="8" fill="#000"/><rect x="9" y="1" width="1" height="6" fill="#000"/><rect x="10" y="2" width="1" height="4" fill="#000"/><rect x="11" y="3" width="1" height="2" fill="#000"/></svg>
<div class="t" style="left:115px;top:416px;font-size:11px;line-height:13px;color:#000;">4</div>
<div class="t" style="left:166px;top:416px;font-size:11px;line-height:13px;color:#000;">12</div>
<div class="a" style="left:224px;top:416px;width:13px;height:13px;background:#fff;"></div>
<div class="a" style="left:224px;top:416px;width:13px;height:1px;background:#848284;"></div>
<div class="a" style="left:224px;top:416px;width:1px;height:13px;background:#848284;"></div>
<div class="a" style="left:225px;top:417px;width:11px;height:1px;background:#424142;"></div>
<div class="a" style="left:225px;top:417px;width:1px;height:11px;background:#424142;"></div>
<div class="a" style="left:224px;top:428px;width:13px;height:1px;background:#ffffff;"></div>
<div class="a" style="left:236px;top:416px;width:1px;height:13px;background:#ffffff;"></div>
<div class="a" style="left:225px;top:427px;width:11px;height:1px;background:#d6d3ce;"></div>
<div class="a" style="left:235px;top:417px;width:1px;height:11px;background:#d6d3ce;"></div>
<div class="t" style="left:259px;top:416px;font-size:11px;line-height:13px;color:#000;">5</div>
<div class="t" style="left:322px;top:416px;font-size:11px;line-height:13px;color:#000;">20</div>
<div class="t" style="left:385px;top:416px;font-size:11px;line-height:13px;color:#000;">10</div>
<div class="t" style="left:434px;top:416px;font-size:11px;line-height:13px;color:#000;">900</div>
<div class="t" style="left:487px;top:416px;font-size:11px;line-height:13px;color:#000;">0</div>
<div class="a" style="left:555px;top:416px;width:13px;height:13px;background:#fff;"></div>
<div class="a" style="left:555px;top:416px;width:13px;height:1px;background:#848284;"></div>
<div class="a" style="left:555px;top:416px;width:1px;height:13px;background:#848284;"></div>
<div class="a" style="left:556px;top:417px;width:11px;height:1px;background:#424142;"></div>
<div class="a" style="left:556px;top:417px;width:1px;height:11px;background:#424142;"></div>
<div class="a" style="left:555px;top:428px;width:13px;height:1px;background:#ffffff;"></div>
<div class="a" style="left:567px;top:416px;width:1px;height:13px;background:#ffffff;"></div>
<div class="a" style="left:556px;top:427px;width:11px;height:1px;background:#d6d3ce;"></div>
<div class="a" style="left:566px;top:417px;width:1px;height:11px;background:#d6d3ce;"></div>
<div class="t" style="left:30px;top:207px;font-size:11px;line-height:13px;color:#000;">Horizontal</div>
<div class="a" style="left:14px;top:251px;width:72px;height:21px;background:#d6d3ce;"></div>
<div class="a" style="left:14px;top:251px;width:72px;height:1px;background:#ffffff;"></div>
<div class="a" style="left:14px;top:251px;width:1px;height:21px;background:#ffffff;"></div>
<div class="a" style="left:14px;top:271px;width:72px;height:1px;background:#424142;"></div>
<div class="a" style="left:85px;top:251px;width:1px;height:21px;background:#424142;"></div>
<div class="a" style="left:15px;top:270px;width:70px;height:1px;background:#848284;"></div>
<div class="a" style="left:84px;top:252px;width:1px;height:19px;background:#848284;"></div>
<div class="t" style="left:14px;width:72px;top:255px;font-size:11px;line-height:13px;text-align:center;">Neu F2</div>
<div class="a" style="left:14px;top:279px;width:72px;height:21px;background:#d6d3ce;"></div>
<div class="a" style="left:14px;top:279px;width:72px;height:1px;background:#ffffff;"></div>
<div class="a" style="left:14px;top:279px;width:1px;height:21px;background:#ffffff;"></div>
<div class="a" style="left:14px;top:299px;width:72px;height:1px;background:#424142;"></div>
<div class="a" style="left:85px;top:279px;width:1px;height:21px;background:#424142;"></div>
<div class="a" style="left:15px;top:298px;width:70px;height:1px;background:#848284;"></div>
<div class="a" style="left:84px;top:280px;width:1px;height:19px;background:#848284;"></div>
<div class="t" style="left:14px;width:72px;top:283px;font-size:11px;line-height:13px;text-align:center;">Löschen F4</div>
<div class="t" style="left:30px;top:368px;font-size:11px;line-height:13px;color:#000;">Vertikal</div>
<div class="a" style="left:14px;top:421px;width:72px;height:21px;background:#d6d3ce;"></div>
<div class="a" style="left:14px;top:421px;width:72px;height:1px;background:#ffffff;"></div>
<div class="a" style="left:14px;top:421px;width:1px;height:21px;background:#ffffff;"></div>
<div class="a" style="left:14px;top:441px;width:72px;height:1px;background:#424142;"></div>
<div class="a" style="left:85px;top:421px;width:1px;height:21px;background:#424142;"></div>
<div class="a" style="left:15px;top:440px;width:70px;height:1px;background:#848284;"></div>
<div class="a" style="left:84px;top:422px;width:1px;height:19px;background:#848284;"></div>
<div class="t" style="left:14px;width:72px;top:425px;font-size:11px;line-height:13px;text-align:center;">Neu F7</div>
<div class="a" style="left:14px;top:449px;width:72px;height:21px;background:#d6d3ce;"></div>
<div class="a" style="left:14px;top:449px;width:72px;height:1px;background:#ffffff;"></div>
<div class="a" style="left:14px;top:449px;width:1px;height:21px;background:#ffffff;"></div>
<div class="a" style="left:14px;top:469px;width:72px;height:1px;background:#424142;"></div>
<div class="a" style="left:85px;top:449px;width:1px;height:21px;background:#424142;"></div>
<div class="a" style="left:15px;top:468px;width:70px;height:1px;background:#848284;"></div>
<div class="a" style="left:84px;top:450px;width:1px;height:19px;background:#848284;"></div>
<div class="t" style="left:14px;width:72px;top:453px;font-size:11px;line-height:13px;text-align:center;">Löschen F8</div>
<div class="a" style="left:48px;top:533px;width:72px;height:25px;background:#000;"></div>
<div class="a" style="left:49px;top:534px;width:70px;height:23px;background:#d6d3ce;"></div>
<div class="a" style="left:49px;top:534px;width:70px;height:1px;background:#ffffff;"></div>
<div class="a" style="left:49px;top:534px;width:1px;height:23px;background:#ffffff;"></div>
<div class="a" style="left:49px;top:556px;width:70px;height:1px;background:#424142;"></div>
<div class="a" style="left:118px;top:534px;width:1px;height:23px;background:#424142;"></div>
<div class="a" style="left:50px;top:555px;width:68px;height:1px;background:#848284;"></div>
<div class="a" style="left:117px;top:535px;width:1px;height:21px;background:#848284;"></div>
<div class="t" style="left:48px;width:72px;top:539px;font-size:11px;line-height:13px;text-align:center;">Anzeigen</div>
<div class="a" style="left:148px;top:533px;width:72px;height:25px;background:#d6d3ce;"></div>
<div class="a" style="left:148px;top:533px;width:72px;height:1px;background:#ffffff;"></div>
<div class="a" style="left:148px;top:533px;width:1px;height:25px;background:#ffffff;"></div>
<div class="a" style="left:148px;top:557px;width:72px;height:1px;background:#424142;"></div>
<div class="a" style="left:219px;top:533px;width:1px;height:25px;background:#424142;"></div>
<div class="a" style="left:149px;top:556px;width:70px;height:1px;background:#848284;"></div>
<div class="a" style="left:218px;top:534px;width:1px;height:23px;background:#848284;"></div>
<div class="t" style="left:148px;width:72px;top:539px;font-size:11px;line-height:13px;text-align:center;">Ok</div>
<div class="a" style="left:0px;top:563px;width:932px;height:1px;background:#848284;"></div>
<div class="a" style="left:0px;top:564px;width:932px;height:1px;background:#424142;"></div>
<div class="a" style="left:612px;top:60px;width:330px;height:490px;background:#fff;box-sizing:border-box;border:1px solid #000;"></div>
<div class="t" style="left:613px;top:66px;font-size:19.5px;line-height:22px;font-weight:bold;">900x215</div>
<div class="t" style="left:613px;top:162px;font-size:10px;line-height:11px;letter-spacing:-0.6px;">Ø10,0,215,5,60x15</div>
<div class="t" style="left:728px;top:135px;font-size:10px;line-height:11px;letter-spacing:-0.6px;transform-origin:0 100%;transform:rotate(-45deg);">Ø12,0,900,5,20x10</div>
<svg class="a" style="left:0;top:0" width="932" height="565" shape-rendering="crispEdges"><rect x="719" y="163" width="92" height="1"/><rect x="719" y="170" width="92" height="1"/><rect x="719" y="176" width="92" height="1"/><rect x="719" y="183" width="92" height="1"/><rect x="719" y="189" width="92" height="1"/><rect x="719" y="196" width="92" height="1"/><rect x="719" y="202" width="92" height="1"/><rect x="719" y="208" width="92" height="1"/><rect x="719" y="215" width="92" height="1"/><rect x="719" y="221" width="92" height="1"/><rect x="719" y="228" width="92" height="1"/><rect x="719" y="234" width="92" height="1"/><rect x="719" y="240" width="92" height="1"/><rect x="719" y="247" width="92" height="1"/><rect x="719" y="253" width="92" height="1"/><rect x="719" y="260" width="92" height="1"/><rect x="719" y="266" width="92" height="1"/><rect x="719" y="272" width="92" height="1"/><rect x="719" y="279" width="92" height="1"/><rect x="719" y="285" width="92" height="1"/><rect x="719" y="292" width="92" height="1"/><rect x="719" y="298" width="92" height="1"/><rect x="719" y="305" width="92" height="1"/><rect x="719" y="311" width="92" height="1"/><rect x="719" y="317" width="92" height="1"/><rect x="719" y="324" width="92" height="1"/><rect x="719" y="330" width="92" height="1"/><rect x="719" y="337" width="92" height="1"/><rect x="719" y="343" width="92" height="1"/><rect x="719" y="349" width="92" height="1"/><rect x="719" y="356" width="92" height="1"/><rect x="719" y="362" width="92" height="1"/><rect x="719" y="369" width="92" height="1"/><rect x="719" y="375" width="92" height="1"/><rect x="719" y="381" width="92" height="1"/><rect x="719" y="388" width="92" height="1"/><rect x="719" y="394" width="92" height="1"/><rect x="719" y="401" width="92" height="1"/><rect x="719" y="407" width="92" height="1"/><rect x="719" y="413" width="92" height="1"/><rect x="719" y="420" width="92" height="1"/><rect x="719" y="426" width="92" height="1"/><rect x="719" y="433" width="92" height="1"/><rect x="719" y="439" width="92" height="1"/><rect x="719" y="446" width="92" height="1"/><rect x="719" y="452" width="92" height="1"/><rect x="719" y="458" width="92" height="1"/><rect x="719" y="465" width="92" height="1"/><rect x="719" y="471" width="92" height="1"/><rect x="719" y="478" width="92" height="1"/><rect x="719" y="484" width="92" height="1"/><rect x="719" y="490" width="92" height="1"/><rect x="719" y="497" width="92" height="1"/><rect x="719" y="503" width="92" height="1"/><rect x="719" y="510" width="92" height="1"/><rect x="719" y="516" width="92" height="1"/><rect x="719" y="522" width="92" height="1"/><rect x="719" y="529" width="92" height="1"/><rect x="719" y="535" width="92" height="1"/><rect x="719" y="542" width="92" height="1"/><rect x="721" y="161" width="1" height="385"/><rect x="725" y="161" width="1" height="385"/><rect x="730" y="161" width="1" height="385"/><rect x="734" y="161" width="1" height="385"/><rect x="738" y="161" width="1" height="385"/><rect x="742" y="161" width="1" height="385"/><rect x="747" y="161" width="1" height="385"/><rect x="751" y="161" width="1" height="385"/><rect x="755" y="161" width="1" height="385"/><rect x="760" y="161" width="1" height="385"/><rect x="764" y="161" width="1" height="385"/><rect x="768" y="161" width="1" height="385"/><rect x="772" y="161" width="1" height="385"/><rect x="777" y="161" width="1" height="385"/><rect x="781" y="161" width="1" height="385"/><rect x="785" y="161" width="1" height="385"/><rect x="789" y="161" width="1" height="385"/><rect x="794" y="161" width="1" height="385"/><rect x="798" y="161" width="1" height="385"/><rect x="802" y="163" width="1" height="383"/><rect x="807" y="163" width="1" height="383"/></svg>
<div class="t" style="left:801px;top:151px;font-size:10px;line-height:11px;">10</div>
<div class="t" style="left:710px;top:526px;font-size:10px;line-height:11px;">-5</div>
</body></html>
